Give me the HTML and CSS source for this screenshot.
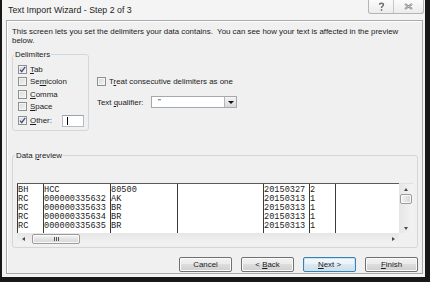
FILE: index.html
```html
<!DOCTYPE html>
<html>

<head>
  <meta charset="UTF-8">
  <title>Text Import Wizard - Step 2 of 3</title>
  <link rel="stylesheet" href="styles.css">
</head>

<body>
  <div class="window">
    <div class="titlebar">
      <span class="title">Text Import Wizard - Step 2 of 3</span>
      <div class="caption">
        <div class="cap help">
          <svg width="7" height="9" viewBox="0 0 7 9">
            <path d="M1.6 2.8 C1.6 0.6 5.4 0.6 5.4 2.8 C5.4 4.3 3.5 4.2 3.5 5.9" fill="none" stroke="#6e6e6e" stroke-width="1.5" />
            <circle cx="3.5" cy="7.9" r="0.9" fill="#6e6e6e" />
          </svg>
        </div>
        <div class="cap close">
          <svg width="9" height="7" viewBox="0 0 9 7">
            <path d="M1 1 L8 6 M8 1 L1 6" stroke="#7a7a7a" stroke-width="2" />
            <path d="M1 1 L8 6 M8 1 L1 6" stroke="#f2f2f2" stroke-width="0.6" />
          </svg>
        </div>
      </div>
    </div>

    <div class="panel">
      <p class="intro">This screen lets you set the delimiters your data contains.&nbsp; You can see how your text is affected in the preview<br>below.</p>

      <div class="options">
        <fieldset class="group delims">
          <legend>Delimiters</legend>
          <label class="check"><span class="box"><svg width="7" height="7" viewBox="0 0 7 7"><path d="M1 3.6 L2.7 5.6 L6.2 0.8" fill="none" stroke="#3f5189" stroke-width="1.3" /></svg></span><span><u>T</u>ab</span></label>
          <label class="check"><span class="box"></span><span>Se<u>m</u>icolon</span></label>
          <label class="check"><span class="box"></span><span><u>C</u>omma</span></label>
          <label class="check"><span class="box"></span><span><u>S</u>pace</span></label>
          <label class="check other"><span class="box"><svg width="7" height="7" viewBox="0 0 7 7"><path d="M1 3.6 L2.7 5.6 L6.2 0.8" fill="none" stroke="#3f5189" stroke-width="1.3" /></svg></span><span><u>O</u>ther:</span><span class="field"><i class="caret"></i></span></label>
        </fieldset>

        <div class="side">
          <label class="check"><span class="box"></span><span>T<u>r</u>eat consecutive delimiters as one</span></label>
          <div class="qualifier">
            <span class="qlabel">Text <u>q</u>ualifier:</span>
            <div class="select">
              <span class="value">"</span>
              <span class="drop"><i class="tri down"></i></span>
            </div>
          </div>
        </div>
      </div>

      <fieldset class="group preview">
        <legend>Data <u>p</u>review</legend>
        <div class="viewer">
          <div class="cols">
            <div class="col"><div>BH</div><div>RC</div><div>RC</div><div>RC</div><div>RC</div></div>
            <div class="col"><div>HCC</div><div>000000335632</div><div>000000335633</div><div>000000335634</div><div>000000335635</div></div>
            <div class="col"><div>80500</div><div>AK</div><div>BR</div><div>BR</div><div>BR</div></div>
            <div class="col"></div>
            <div class="col"><div>20150327</div><div>20150313</div><div>20150313</div><div>20150313</div><div>20150313</div></div>
            <div class="col"><div>2</div><div>1</div><div>1</div><div>1</div><div>1</div></div>
            <div class="col"></div>
          </div>
          <div class="vscroll">
            <span class="arrow"><i class="tri up"></i></span>
            <span class="thumb"></span>
            <span class="track"></span>
            <span class="arrow"><i class="tri down small"></i></span>
          </div>
          <div class="hscroll">
            <span class="arrow"><i class="tri left"></i></span>
            <span class="thumb"><i class="grip"></i></span>
            <span class="track"></span>
            <span class="arrow"><i class="tri right"></i></span>
          </div>
          <div class="corner"></div>
        </div>
      </fieldset>

      <div class="buttons">
        <button>Cancel</button>
        <button>&lt; <u>B</u>ack</button>
        <button class="default"><u>N</u>ext &gt;</button>
        <button><u>F</u>inish</button>
      </div>
    </div>
  </div>
</body>

</html>
```

FILE: styles.css
```css
* {
  margin: 0;
  padding: 0;
  box-sizing: border-box;
}

body {
  width: 430px;
  height: 282px;
  overflow: hidden;
  background: #181818;
  font-family: "Liberation Sans", Arial, sans-serif;
  font-size: 7.9px;
  color: #1b1b1b;
}

.window {
  width: 423px;
  height: 277px;
  margin-left: 2px;
  background: #f4f4f4;
  display: flex;
  flex-direction: column;
}

/* title bar */

.titlebar {
  height: 20px;
  display: flex;
  justify-content: space-between;
  align-items: flex-start;
}

.title {
  font-size: 8.8px;
  line-height: 20px;
  padding-left: 6px;
  color: #1e1e1e;
}

.caption {
  display: flex;
  height: 14px;
  margin-right: 1px;
  border: 1px solid #b4b4b4;
  border-top: none;
  border-radius: 0 0 3px 3px;
  background: linear-gradient(#fbfbfb, #ececec);
}

.cap {
  display: flex;
  justify-content: center;
  align-items: center;
  height: 100%;
}

.help {
  width: 25px;
  border-right: 1px solid #c6c6c6;
}

.close {
  width: 29px;
}

/* main panel */

.panel {
  flex: 1;
  margin: 0 2px 3px 4px;
  background: #f0f0f0;
  border: 1px solid #a9a9a9;
  box-shadow: inset 1px 1px 0 #fff;
  padding: 6px 4px 1px 5px;
  display: flex;
  flex-direction: column;
}

.intro {
  line-height: 9px;
  white-space: nowrap;
}

.options {
  display: flex;
  align-items: flex-start;
  margin-top: 5px;
}

.group {
  border: 1px solid #d0d8de;
  border-radius: 3px;
  min-width: 0;
}

.group legend {
  line-height: 9px;
  padding: 0 1px;
}

.delims {
  width: 77px;
  padding: 4px 4px 2px 1px;
}

.check {
  display: flex;
  align-items: center;
  height: 12.5px;
  white-space: nowrap;
}

.delims .check {
  padding-left: 4px;
}

.check.other {
  height: 15px;
}

.box {
  width: 9px;
  height: 9px;
  margin-right: 3px;
  border: 1px solid #8e8f8f;
  background: linear-gradient(135deg, #d6d6d6, #f7f7f7);
  box-shadow: inset 0 0 0 1px #f4f4f4;
  display: flex;
  justify-content: center;
  align-items: center;
}

.field {
  width: 22px;
  height: 12px;
  margin-left: auto;
  background: #fff;
  border: 1px solid #b7bcc2;
  border-top-color: #9da3aa;
  display: flex;
  align-items: center;
  padding-left: 4px;
}

.caret {
  width: 1px;
  height: 8px;
  background: #000;
}

.side {
  margin-left: 8px;
  padding-top: 25px;
}

.side .check {
  height: 12px;
}

.qualifier {
  display: flex;
  align-items: center;
  margin-top: 9px;
}

.qlabel {
  width: 54px;
}

.select {
  width: 86px;
  height: 12px;
  background: #fff;
  border: 1px solid #a5a9ad;
  display: flex;
  align-items: center;
}

.value {
  flex: 1;
  padding-left: 6px;
  line-height: 10px;
}

.drop {
  width: 12px;
  height: 10px;
  border-left: 1px solid #b5b5b5;
  background: linear-gradient(#f4f4f4, #d9d9d9);
  display: flex;
  justify-content: center;
  align-items: center;
}

.tri {
  width: 0;
  height: 0;
  border: 3px solid transparent;
}

.tri.down {
  border-top: 3px solid #111;
  border-bottom: none;
}

.tri.up {
  border-bottom: 3px solid #4a4a4a;
  border-top: none;
  border-width: 0 2.5px 3px;
}

.tri.down.small {
  border-top-color: #4a4a4a;
  border-width: 3px 2.5px 0;
}

.tri.left {
  border-right: 3px solid #4a4a4a;
  border-left: none;
  border-width: 2.5px 3px 2.5px 0;
}

.tri.right {
  border-left: 3px solid #4a4a4a;
  border-right: none;
  border-width: 2.5px 0 2.5px 3px;
}

/* data preview */

.preview {
  margin-top: 20px;
  padding: 23px 4px 2px 2px;
}

.viewer {
  margin-left: 2px;
  display: grid;
  grid-template-columns: 1fr 14px;
  grid-template-rows: 50px 12px;
}

.cols {
  display: grid;
  grid-template-columns: 26px 67px 67px 86px 46px 26px 1fr;
  background: #fff;
  border-top: 1px solid #5a5a5a;
  font-family: "Liberation Mono", "Courier New", monospace;
  font-size: 8.6px;
  line-height: 9.2px;
  color: #1c1c1c;
}

.col {
  border-left: 1px solid #3a3a3a;
  padding-top: 1.5px;
  overflow: hidden;
  white-space: nowrap;
}

.vscroll,
.hscroll {
  display: flex;
  background: linear-gradient(to right, #e6e6e6, #f3f3f3);
}

.vscroll {
  flex-direction: column;
  border-top: 1px solid #e0e0e0;
}

.hscroll {
  background: linear-gradient(#e6e6e6, #f3f3f3);
}

.arrow {
  display: flex;
  justify-content: center;
  align-items: center;
}

.vscroll .arrow {
  height: 10px;
}

.hscroll .arrow {
  width: 13px;
}

.hscroll .arrow:last-child {
  width: 12px;
}

.track {
  flex: 1;
}

.thumb {
  border: 1px solid #9b9b9b;
  border-radius: 2px;
  background: linear-gradient(to right, #f5f5f5, #e3e3e3 50%, #d6d6d6);
  box-shadow: inset 0 0 0 1px #fafafa;
  display: flex;
  justify-content: center;
  align-items: center;
}

.vscroll .thumb {
  height: 10px;
  margin: 0 1px 0 1px;
}

.hscroll .thumb {
  width: 48px;
  height: 10px;
  margin: 1px 0 0 2px;
  background: linear-gradient(#f5f5f5, #e3e3e3 50%, #d6d6d6);
}

.grip {
  width: 5px;
  height: 4px;
  background: repeating-linear-gradient(to right, #555 0 1px, transparent 1px 2px);
}

.corner {
  background: #f0f0f0;
}

/* buttons */

.buttons {
  display: flex;
  justify-content: flex-end;
  gap: 9px;
  margin-top: 9px;
}

button {
  width: 53px;
  height: 15px;
  font-family: "Liberation Sans", Arial, sans-serif;
  font-size: 7.9px;
  color: #1b1b1b;
  border: 1px solid #707070;
  border-radius: 2px;
  background: linear-gradient(#f2f2f2, #ebebeb 45%, #dddddd 50%, #cfcfcf);
  box-shadow: inset 0 0 0 1px #fbfbfb;
}

button.default {
  border-color: #3c7fb1;
  background: linear-gradient(#f4f9fc, #eaf3f8 45%, #dce9f1 50%, #cfdde7);
  box-shadow: inset 0 0 0 1px #c5e6f8;
}
```
